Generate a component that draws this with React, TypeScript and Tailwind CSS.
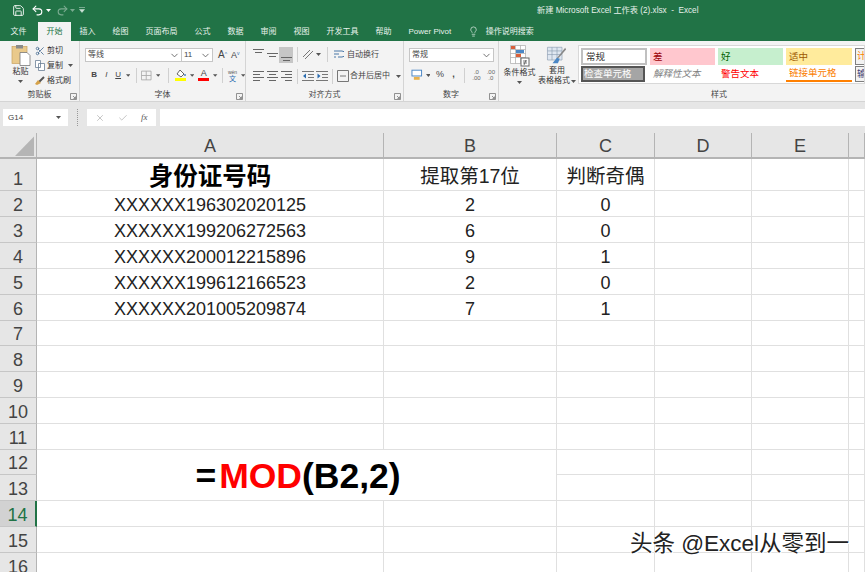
import React from 'react';
import { Check, ChevronDown, Lightbulb, Redo2, Save, Scissors, Undo2, X } from 'lucide-react';

const tabs = ['插入', '绘图', '页面布局', '公式', '数据', '审阅', '视图', '开发工具', '帮助', 'Power Pivot'];

const columns = ['A', 'B', 'C', 'D', 'E', ''];

const rows = [
  ['身份证号码', '提取第17位', '判断奇偶'],
  ['XXXXXX196302020125', '2', '0'],
  ['XXXXXX199206272563', '6', '0'],
  ['XXXXXX200012215896', '9', '1'],
  ['XXXXXX199612166523', '2', '0'],
  ['XXXXXX201005209874', '7', '1'],
];

function Caret({ className = 'mx-[2px]' }: { className?: string }) {
  return (
    <svg width="5" height="3" viewBox="0 0 5 3" className={className}>
      <path d="M0 0h5L2.5 3z" fill="#555" />
    </svg>
  );
}

function Lines({ widths, highlight, align = 'justify-center' }: { widths: number[][]; highlight?: boolean; align?: string }) {
  return (
    <span className={`flex h-[16px] w-[14px] flex-col items-center gap-[2px] py-[2px] ${align} ${highlight ? 'bg-[#c6c6c6]' : ''}`}>
      {widths.map((w, i) => (
        <svg key={i} width="11" height="1" viewBox="0 0 11 1" className="shrink-0">
          <rect x={w[0]} width={w[1]} height="1" fill="#666" />
        </svg>
      ))}
    </span>
  );
}

function Sep() {
  return <span className="mx-[4px] h-[15px] w-px bg-[#d0d0d0]" />;
}

function Group({ label, width, launcher = true, children }: { label: string; width: string; launcher?: boolean; children: React.ReactNode }) {
  return (
    <div className={`relative flex h-full shrink-0 flex-col border-r border-[#d4d4d4] ${width}`}>
      <div className="min-h-0 flex-1">{children}</div>
      <div className="h-[15px] text-center text-[8px] leading-[18px] text-[#444]">{label}</div>
      {launcher && (
        <svg width="7" height="7" viewBox="0 0 7 7" className="absolute bottom-[1px] right-[2px]">
          <path d="M.5 .5h6v6h-6zM3 3l2.5 2.5M5.5 3.5v2h-2" fill="none" stroke="#777" strokeWidth=".8" />
        </svg>
      )}
    </div>
  );
}

function Clipboard() {
  return (
    <div className="flex pl-[10px] pt-[3px]">
      <div className="flex w-[21px] flex-col items-center">
        <svg width="20" height="22" viewBox="0 0 20 22">
          <rect x="1" y="2.5" width="15" height="17" fill="#e9c98b" stroke="#c9a25e" strokeWidth=".7" />
          <rect x="5" y="1" width="7" height="3.5" fill="#8a8a8a" />
          <path d="M9 8.5h7l3 3v10H9z" fill="#fff" stroke="#777" strokeWidth=".8" />
        </svg>
        <span className="text-[8px] leading-[11px] text-[#333]">粘贴</span>
        <Caret className="mt-[3px]" />
      </div>
      <div className="ml-[4px] flex flex-col gap-[4px] pt-[1px] text-[8px] leading-[11px] text-[#333]">
        <span className="flex items-center gap-[2px]"><Scissors size={10} color="#4b6f94" />剪切</span>
        <span className="flex items-center gap-[2px]">
          <svg width="10" height="11" viewBox="0 0 10 11"><path d="M.5.5h5v7h-5zM3.5 3.5h6v7h-6z" fill="#fff" stroke="#6a7f95" strokeWidth=".8" /></svg>
          复制<Caret className="ml-[3px]" />
        </span>
        <span className="flex items-center gap-[2px]">
          <svg width="10" height="10" viewBox="0 0 10 10"><path d="M4 6l5-5" stroke="#555" strokeWidth="2" /><path d="M0 8l3-4 3 3-4 2z" fill="#d6a24a" /></svg>
          格式刷
        </span>
      </div>
    </div>
  );
}

function Font() {
  return (
    <div className="pl-[5px] pt-[7px]">
      <div className="flex items-center">
        <div className="flex h-[14px] w-[97px] items-center justify-between border border-[#c6c6c6] bg-white pl-[2px] pr-[1px] text-[8px] text-[#444]">
          等线<ChevronDown size={11} color="#666" />
        </div>
        <div className="flex h-[14px] w-[31px] items-center justify-between border border-l-0 border-[#c6c6c6] bg-white pl-[2px] pr-[1px] text-[8px] text-[#444]">
          11<ChevronDown size={11} color="#666" />
        </div>
        <span className="ml-[5px] text-[10px] leading-none text-[#444]">A<sup className="text-[5px] text-[#2b6cb0]">^</sup></span>
        <span className="ml-[4px] text-[9px] leading-none text-[#444]">A<sup className="text-[5px] text-[#2b6cb0]">v</sup></span>
      </div>
      <div className="mt-[5px] flex h-[16px] items-center pl-[3px] text-[8px] text-[#444]">
        <span className="w-[14px] text-center font-bold">B</span>
        <span className="w-[14px] text-center italic">I</span>
        <span className="w-[13px] text-center underline">U</span>
        <Caret />
        <Sep />
        <svg width="12" height="11" viewBox="0 0 12 11"><path d="M.5.5h11v10H.5zM6 .5v10M.5 5.5h11" fill="none" stroke="#aaa" /></svg>
        <Caret className="ml-[4px] mr-[4px]" />
        <Sep />
        <span className="ml-[2px] flex w-[12px] flex-col items-center">
          <svg width="11" height="9" viewBox="0 0 11 9"><path d="M2 5l3-4 4 4-3 3z" fill="#fff" stroke="#666" /><circle cx="10" cy="6" r="1" fill="#4a86c5" /></svg>
          <span className="h-[3px] w-[11px] bg-[#ffff00]" />
        </span>
        <Caret className="ml-[4px] mr-[4px]" />
        <span className="flex w-[12px] flex-col items-center text-[9px] leading-[9px]">
          A<span className="h-[3px] w-[11px] bg-[#ff0000]" />
        </span>
        <Caret className="ml-[4px]" />
        <Sep />
        <span className="flex w-[14px] flex-col items-center text-[5px] leading-[6px] text-[#555]">
          wén<span className="text-[7px] leading-[7px] text-[#2b6cb0]">文</span>
        </span>
        <Caret className="ml-[2px]" />
      </div>
    </div>
  );
}

function Alignment() {
  return (
    <div className="pl-[5px] pt-[5px] text-[8px] text-[#444]">
      <div className="flex h-[17px] items-center">
        <Lines widths={[[0, 11], [2, 7]]} align="justify-start" />
        <Lines widths={[[0, 11], [2, 7]]} />
        <Lines widths={[[0, 11], [2, 7]]} align="justify-end" highlight />
        <Sep />
        <svg width="12" height="11" viewBox="0 0 12 11"><path d="M1 8L8 1M3 10l8-8" stroke="#777" strokeWidth="1" /></svg>
        <Caret className="ml-[2px] mr-[2px]" />
        <Sep />
        <svg width="10" height="11" viewBox="0 0 10 11" className="mr-[3px] ml-[2px]"><path d="M0 2h8a2 2 0 0 1 0 6H4M0 5h5M0 8h2" fill="none" stroke="#4a78a8" /></svg>
        自动换行
      </div>
      <div className="mt-[5px] flex h-[16px] items-center">
        <Lines widths={[[0, 11], [0, 7], [0, 11], [0, 7]]} />
        <Lines widths={[[0, 11], [2, 7], [0, 11], [2, 7]]} />
        <Lines widths={[[0, 11], [4, 7], [0, 11], [4, 7]]} />
        <Sep />
        <svg width="12" height="10" viewBox="0 0 12 10"><path d="M0 .5h12M6 3.5h6M6 6.5h6M0 9.5h12" stroke="#777" /><path d="M1 5l3-2.5v5z" fill="#2b6cb0" /></svg>
        <svg width="12" height="10" viewBox="0 0 12 10" className="ml-[2px]"><path d="M0 .5h12M6 3.5h6M6 6.5h6M0 9.5h12" stroke="#777" /><path d="M4.5 5l-3-2.5v5z" fill="#2b6cb0" /></svg>
        <Sep />
        <svg width="12" height="12" viewBox="0 0 12 12" className="mr-[1px]"><path d="M.5.5h11v11H.5zM3 6h6" fill="none" stroke="#777" /></svg>
        合并后居中
        <Caret className="ml-[6px]" />
      </div>
    </div>
  );
}

function NumberFormat() {
  return (
    <div className="pl-[5px] pt-[7px] text-[#444]">
      <div className="flex h-[14px] w-[85px] items-center justify-between border border-[#c6c6c6] bg-white pl-[2px] pr-[1px] text-[8px]">
        常规<ChevronDown size={11} color="#666" />
      </div>
      <div className="mt-[5px] flex h-[16px] items-center pl-[2px] text-[9px]">
        <svg width="12" height="12" viewBox="0 0 12 12"><rect x="1" y="1" width="10" height="6" fill="#fff" stroke="#4a86c5" /><rect x="3" y="8" width="6" height="3" fill="#e8b04b" /></svg>
        <Caret className="ml-[3px] mr-[3px]" />
        <span className="w-[14px] text-center">%</span>
        <span className="w-[14px] text-center font-bold">,</span>
        <Sep />
        <span className="w-[15px] text-center text-[6px] leading-[6px] text-[#666]">.0<br />.00</span>
        <span className="w-[15px] text-center text-[6px] leading-[6px] text-[#666]">.00<br />.0</span>
      </div>
    </div>
  );
}

function StyleCell({ className, children }: { className: string; children: React.ReactNode }) {
  return <div className={`flex items-center pl-[3px] text-[9.5px] leading-none ${className}`}>{children}</div>;
}

function Styles() {
  return (
    <div className="flex h-full pt-[4px]">
      <div className="flex w-[37px] flex-col items-center pl-[4px] text-[8px] leading-[10px] text-[#333]">
        <svg width="20" height="22" viewBox="0 0 20 22">
          <path d="M.5.5h15v18H.5zM.5 4.5h15M.5 8.5h15M.5 12.5h15M5.5.5v18M10.5.5v18" fill="#fff" stroke="#aaa" strokeWidth=".7" />
          <rect x="1" y="1" width="4" height="3" fill="#d9603b" />
          <rect x="6" y="5" width="8" height="3" fill="#4a86c5" />
          <rect x="6" y="9" width="5" height="3" fill="#d9603b" />
          <rect x="11" y="13" width="8" height="8" fill="#fff" stroke="#666" />
          <path d="M13 16h4M13 18h4M14 20l2-5" stroke="#444" strokeWidth=".7" />
        </svg>
        <span className="mt-[1px] whitespace-nowrap">条件格式</span>
        <Caret className="mt-[3px]" />
      </div>
      <div className="flex w-[42px] flex-col items-center text-[8px] leading-[10px] text-[#333]">
        <svg width="22" height="22" viewBox="0 0 22 22">
          <path d="M.5 2.5h16v14H.5zM.5 6.5h16M.5 10.5h16M5.5 2.5v14M11 2.5v14" fill="#dfe7f1" stroke="#8a9cb0" strokeWidth=".7" />
          <path d="M20 3l-8 10-2 2 3-1 8-9z" fill="#888" />
          <path d="M6 20l5-6 3 1-2 5z" fill="#4a86c5" />
        </svg>
        <span className="mt-[1px]">套用</span>
        <span className="flex items-center whitespace-nowrap">表格格式<Caret className="ml-[1px]" /></span>
      </div>
      <div className="grid h-[39px] flex-1 grid-cols-[69px_68px_68px_69px_1fr] grid-rows-[18px_16px] overflow-hidden border border-[#d8d8d8] bg-white pl-[2px] pt-[2px]">
        <StyleCell className="mr-[3px] mb-[1px] border-2 border-[#c0c0c0] text-[#333]">常规</StyleCell>
        <StyleCell className="mr-[3px] mb-[1px] bg-[#ffc7ce] text-[#9c0006]">差</StyleCell>
        <StyleCell className="mr-[3px] mb-[1px] bg-[#c6efce] text-[#006100]">好</StyleCell>
        <StyleCell className="mr-[3px] mb-[1px] bg-[#ffeb9c] text-[#9c5700]">适中</StyleCell>
        <StyleCell className="mb-[1px] border border-[#7f7f7f] bg-[#f2f2f2] !pl-[1px] text-[9px] text-[#fa7d00]">计</StyleCell>
        <StyleCell className="mr-[5px] border-2 border-[#555] bg-[#a5a5a5] !pl-[1px] text-white">检查单元格</StyleCell>
        <StyleCell className="mr-[3px] italic text-[#7f7f7f]">解释性文本</StyleCell>
        <StyleCell className="mr-[3px] text-[#ff0000]">警告文本</StyleCell>
        <StyleCell className="mr-[3px] border-b-2 border-[#ff8001] text-[#fa7d00]">链接单元格</StyleCell>
        <StyleCell className="border border-[#7f7f7f] bg-[#f2f2f2] !pl-[1px] text-[9px] text-[#3f3f76]">输</StyleCell>
      </div>
    </div>
  );
}

function SheetGrid() {
  const cellBorder = 'border-r border-b border-[#e0e0e0]';
  const rowNumbers = Array.from({ length: 16 }, (_, i) => i + 1);

  return (
    <div className="grid grid-cols-[37px_347px_173px_98px_97px_97px_16px] grid-rows-[26px_32px_26px_26px_26px_26px_26px_25px_26px_26px_26px_26px_25px_26px_26px_26px_26px] text-[18px] leading-[21px] text-[#222]">
      <div className="flex items-start border-r border-b-2 border-[#b4b4b4] bg-[#e6e6e6]">
        <svg width="35" height="24" viewBox="0 0 35 24"><path d="M34 3.5V23H15z" fill="#b5b5b5" /></svg>
      </div>
      {columns.map((c, i) => (
        <div key={i} className="flex items-end justify-center border-r border-b-2 border-[#b4b4b4] bg-[#e6e6e6] text-[#444]">{c}</div>
      ))}

      {rowNumbers.map((n) => {
        const data = rows[n - 1];
        const rowHead = (
          <div
            key={`h${n}`}
            className={`flex items-end justify-center border-b border-[#c6c6c6] ${n === 14 ? 'border-r-2 border-r-[#217346] bg-[#d2d2d2] text-[#217346]' : 'border-r border-r-[#b4b4b4] bg-[#e6e6e6] text-[#444]'}`}
          >
            {n}
          </div>
        );

        if (n === 12) {
          return (
            <React.Fragment key={n}>
              {rowHead}
              <div className={`col-span-2 row-span-2 flex items-center justify-center pl-[3px] pt-[4px] text-[35.5px] leading-none font-bold text-black ${cellBorder}`}>
                <span>=<span className="ml-[3px] text-[#ff0000]">MOD</span>(B2,2)</span>
              </div>
              {[0, 1, 2, 3].map((c) => <div key={c} className={cellBorder} />)}
            </React.Fragment>
          );
        }

        if (n === 13) {
          return (
            <React.Fragment key={n}>
              {rowHead}
              {[0, 1, 2, 3].map((c) => <div key={c} className={cellBorder} />)}
            </React.Fragment>
          );
        }

        return (
          <React.Fragment key={n}>
            {rowHead}
            {[0, 1, 2, 3, 4, 5].map((c) => (
              <div key={c} className={`flex items-end justify-center ${cellBorder} ${n === 1 && c === 0 ? 'pb-[3px] text-[24.5px] font-bold text-black' : ''} ${n === 1 && c > 0 ? 'pb-[3px] text-[19.5px] text-[#222]' : ''}`}>
                {data?.[c]}
              </div>
            ))}
          </React.Fragment>
        );
      })}
    </div>
  );
}

export default function App() {
  return (
    <div className="relative h-[572px] w-[865px] overflow-hidden bg-white font-['Liberation_Sans','Noto_Sans_CJK_SC',sans-serif]">
      <div className="relative flex h-[20px] items-center bg-[#217346] pl-[12px] text-white">
        <Save size={13} strokeWidth={1.6} />
        <Undo2 size={13} strokeWidth={2} className="ml-[6px]" />
        <Caret className="ml-[2px] [&_path]:fill-white" />
        <Redo2 size={13} strokeWidth={2} className="ml-[5px] opacity-40" />
        <Caret className="ml-[1px] opacity-40 [&_path]:fill-white" />
        <svg width="6" height="6" viewBox="0 0 6 6" className="ml-[4px]"><path d="M0 .5h6M.5 2.5h5L3 5.5z" fill="#cfe3d8" stroke="#cfe3d8" strokeWidth=".5" /></svg>
        <span className="absolute left-[537px] top-[4px] whitespace-pre text-[8.2px] leading-[13px] text-[#e6f0ea]">新建 Microsoft Excel 工作表 (2).xlsx  -  Excel</span>
      </div>

      <div className="flex h-[21px] items-end bg-[#217346] pl-[2px] text-[8px] text-[#e8f2ec]">
        <span className="flex h-[19px] items-center px-[8.5px]">文件</span>
        <span className="ml-[3px] flex h-[19px] items-center bg-[#f3f3f3] px-[8.5px] text-[#217346]">开始</span>
        {tabs.map((t) => (
          <span key={t} className="flex h-[19px] items-center px-[8.5px]">{t}</span>
        ))}
        <Lightbulb size={11} strokeWidth={1.5} className="ml-[8px] mb-[4px]" />
        <span className="flex h-[19px] items-center pl-[7px]">操作说明搜索</span>
      </div>

      <div className="flex h-[61px] border-b border-[#d4d4d4] bg-[#f3f3f3]">
        <Group label="剪贴板" width="w-[80px]"><Clipboard /></Group>
        <Group label="字体" width="w-[166px]"><Font /></Group>
        <Group label="对齐方式" width="w-[158px]"><Alignment /></Group>
        <Group label="数字" width="w-[95px]"><NumberFormat /></Group>
        <div className="relative flex h-full min-w-0 flex-1 flex-col">
          <div className="min-h-0 flex-1"><Styles /></div>
          <div className="h-[15px] pl-[212px] text-left text-[8px] leading-[18px] text-[#444]">样式</div>
        </div>
      </div>

      <div className="flex h-[31px] items-start bg-[#e6e6e6] pt-[7px]">
        <div className="ml-[3px] flex h-[17px] w-[65px] items-center justify-between bg-white pl-[5px] pr-[5px] text-[8px] text-[#444]">
          G14<Caret />
        </div>
        <span className="ml-[9px] mr-[9px] h-[17px] w-px border-l border-dotted border-[#999]" />
        <div className="flex h-[17px] w-[69px] items-center justify-around bg-white px-[2px]">
          <X size={10} color="#bbb" />
          <Check size={10} color="#bbb" />
          <span className="font-['Liberation_Serif',serif] text-[9px] italic text-[#555]">fx</span>
        </div>
        <div className="ml-[4px] h-[17px] flex-1 bg-white" />
      </div>

      <SheetGrid />

      <span className="absolute left-[630px] top-[531px] whitespace-nowrap text-[22.5px] leading-[26px] text-[#222] [text-shadow:1px_1px_0_#fff,-1px_0_0_#fff]">头条 @Excel从零到一</span>
    </div>
  );
}
